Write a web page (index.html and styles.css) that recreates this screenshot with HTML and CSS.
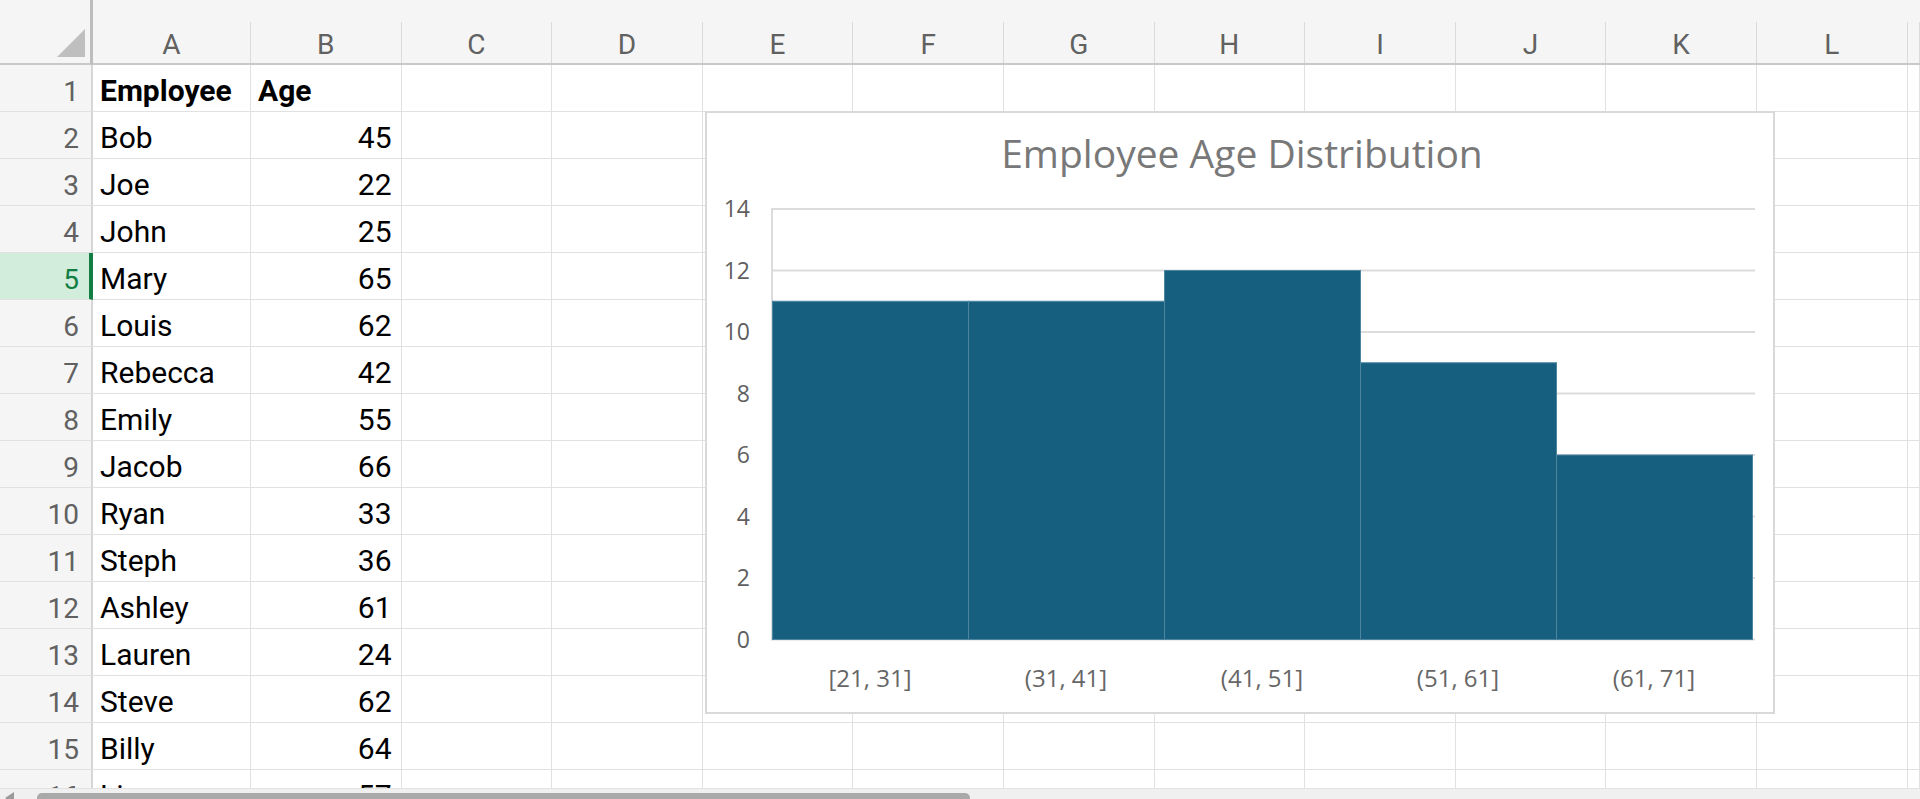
FILE: index.html
```html
<!DOCTYPE html>
<html lang="en">
<head>
<meta charset="utf-8">
<title>Employee Age Distribution</title>
<link rel="stylesheet" href="styles.css">
</head>
<body>
<div class="sheet">
  <div class="corner"><span class="tri"></span></div>
  <div class="colhead"><div>A</div></div>
  <div class="colhead"><div>B</div></div>
  <div class="colhead"><div>C</div></div>
  <div class="colhead"><div>D</div></div>
  <div class="colhead"><div>E</div></div>
  <div class="colhead"><div>F</div></div>
  <div class="colhead"><div>G</div></div>
  <div class="colhead"><div>H</div></div>
  <div class="colhead"><div>I</div></div>
  <div class="colhead"><div>J</div></div>
  <div class="colhead"><div>K</div></div>
  <div class="colhead"><div>L</div></div>
  <div class="colhead"><div></div></div>

  <div class="rowhead">1</div><div class="cell bold">Employee</div><div class="cell bold">Age</div><div class="cell"></div><div class="cell"></div><div class="cell"></div><div class="cell"></div><div class="cell"></div><div class="cell"></div><div class="cell"></div><div class="cell"></div><div class="cell"></div><div class="cell"></div><div class="cell"></div>
  <div class="rowhead">2</div><div class="cell">Bob</div><div class="cell num">45</div><div class="cell"></div><div class="cell"></div><div class="cell"></div><div class="cell"></div><div class="cell"></div><div class="cell"></div><div class="cell"></div><div class="cell"></div><div class="cell"></div><div class="cell"></div><div class="cell"></div>
  <div class="rowhead">3</div><div class="cell">Joe</div><div class="cell num">22</div><div class="cell"></div><div class="cell"></div><div class="cell"></div><div class="cell"></div><div class="cell"></div><div class="cell"></div><div class="cell"></div><div class="cell"></div><div class="cell"></div><div class="cell"></div><div class="cell"></div>
  <div class="rowhead">4</div><div class="cell">John</div><div class="cell num">25</div><div class="cell"></div><div class="cell"></div><div class="cell"></div><div class="cell"></div><div class="cell"></div><div class="cell"></div><div class="cell"></div><div class="cell"></div><div class="cell"></div><div class="cell"></div><div class="cell"></div>
  <div class="rowhead selected">5</div><div class="cell">Mary</div><div class="cell num">65</div><div class="cell"></div><div class="cell"></div><div class="cell"></div><div class="cell"></div><div class="cell"></div><div class="cell"></div><div class="cell"></div><div class="cell"></div><div class="cell"></div><div class="cell"></div><div class="cell"></div>
  <div class="rowhead">6</div><div class="cell">Louis</div><div class="cell num">62</div><div class="cell"></div><div class="cell"></div><div class="cell"></div><div class="cell"></div><div class="cell"></div><div class="cell"></div><div class="cell"></div><div class="cell"></div><div class="cell"></div><div class="cell"></div><div class="cell"></div>
  <div class="rowhead">7</div><div class="cell">Rebecca</div><div class="cell num">42</div><div class="cell"></div><div class="cell"></div><div class="cell"></div><div class="cell"></div><div class="cell"></div><div class="cell"></div><div class="cell"></div><div class="cell"></div><div class="cell"></div><div class="cell"></div><div class="cell"></div>
  <div class="rowhead">8</div><div class="cell">Emily</div><div class="cell num">55</div><div class="cell"></div><div class="cell"></div><div class="cell"></div><div class="cell"></div><div class="cell"></div><div class="cell"></div><div class="cell"></div><div class="cell"></div><div class="cell"></div><div class="cell"></div><div class="cell"></div>
  <div class="rowhead">9</div><div class="cell">Jacob</div><div class="cell num">66</div><div class="cell"></div><div class="cell"></div><div class="cell"></div><div class="cell"></div><div class="cell"></div><div class="cell"></div><div class="cell"></div><div class="cell"></div><div class="cell"></div><div class="cell"></div><div class="cell"></div>
  <div class="rowhead">10</div><div class="cell">Ryan</div><div class="cell num">33</div><div class="cell"></div><div class="cell"></div><div class="cell"></div><div class="cell"></div><div class="cell"></div><div class="cell"></div><div class="cell"></div><div class="cell"></div><div class="cell"></div><div class="cell"></div><div class="cell"></div>
  <div class="rowhead">11</div><div class="cell">Steph</div><div class="cell num">36</div><div class="cell"></div><div class="cell"></div><div class="cell"></div><div class="cell"></div><div class="cell"></div><div class="cell"></div><div class="cell"></div><div class="cell"></div><div class="cell"></div><div class="cell"></div><div class="cell"></div>
  <div class="rowhead">12</div><div class="cell">Ashley</div><div class="cell num">61</div><div class="cell"></div><div class="cell"></div><div class="cell"></div><div class="cell"></div><div class="cell"></div><div class="cell"></div><div class="cell"></div><div class="cell"></div><div class="cell"></div><div class="cell"></div><div class="cell"></div>
  <div class="rowhead">13</div><div class="cell">Lauren</div><div class="cell num">24</div><div class="cell"></div><div class="cell"></div><div class="cell"></div><div class="cell"></div><div class="cell"></div><div class="cell"></div><div class="cell"></div><div class="cell"></div><div class="cell"></div><div class="cell"></div><div class="cell"></div>
  <div class="rowhead">14</div><div class="cell">Steve</div><div class="cell num">62</div><div class="cell"></div><div class="cell"></div><div class="cell"></div><div class="cell"></div><div class="cell"></div><div class="cell"></div><div class="cell"></div><div class="cell"></div><div class="cell"></div><div class="cell"></div><div class="cell"></div>
  <div class="rowhead">15</div><div class="cell">Billy</div><div class="cell num">64</div><div class="cell"></div><div class="cell"></div><div class="cell"></div><div class="cell"></div><div class="cell"></div><div class="cell"></div><div class="cell"></div><div class="cell"></div><div class="cell"></div><div class="cell"></div><div class="cell"></div>
  <div class="rowhead">16</div><div class="cell">Lisa</div><div class="cell num">57</div><div class="cell"></div><div class="cell"></div><div class="cell"></div><div class="cell"></div><div class="cell"></div><div class="cell"></div><div class="cell"></div><div class="cell"></div><div class="cell"></div><div class="cell"></div><div class="cell"></div>
</div>

<div class="chart">
  <svg class="chart-svg" width="1070" height="603" viewBox="0 0 1070 603" xmlns="http://www.w3.org/2000/svg">
    <rect x="1" y="1" width="1068" height="601" fill="#ffffff" stroke="#d9d9d9" stroke-width="2"/>
    <text class="title" x="537" y="57" text-anchor="middle">Employee Age Distribution</text>
    <g stroke="#dcdcdc" stroke-width="2">
      <line x1="67" y1="528.5" x2="1050" y2="528.5"/>
      <line x1="67" y1="467" x2="1050" y2="467"/>
      <line x1="67" y1="405.5" x2="1050" y2="405.5"/>
      <line x1="67" y1="344" x2="1050" y2="344"/>
      <line x1="67" y1="282.5" x2="1050" y2="282.5"/>
      <line x1="67" y1="221" x2="1050" y2="221"/>
      <line x1="67" y1="159.5" x2="1050" y2="159.5"/>
      <line x1="67" y1="98" x2="1050" y2="98"/>
      <line x1="67" y1="97" x2="67" y2="529.5"/>
    </g>
    <g fill="#165f7f" stroke="#4e86a2" stroke-width="1">
      <rect x="67.5" y="190.25" width="196" height="338.25"/>
      <rect x="263.5" y="190.25" width="196" height="338.25"/>
      <rect x="459.5" y="159.5" width="196" height="369"/>
      <rect x="655.5" y="251.75" width="196" height="276.75"/>
      <rect x="851.5" y="344" width="196" height="184.5"/>
    </g>
    <g class="ylab" text-anchor="end">
      <text x="45" y="536.5">0</text>
      <text x="45" y="475">2</text>
      <text x="45" y="413.5">4</text>
      <text x="45" y="352">6</text>
      <text x="45" y="290.5">8</text>
      <text x="45" y="229">10</text>
      <text x="45" y="167.5">12</text>
      <text x="45" y="106">14</text>
    </g>
    <g class="xlab" text-anchor="middle">
      <text x="165" y="576">[21, 31]</text>
      <text x="361" y="576">(31, 41]</text>
      <text x="557" y="576">(41, 51]</text>
      <text x="753" y="576">(51, 61]</text>
      <text x="949" y="576">(61, 71]</text>
    </g>
  </svg>
</div>

<div class="hscroll">
  <span class="arrow"></span>
  <span class="thumb"></span>
</div>
</body>
</html>
```
FILE: styles.css
```css
html, body {
  margin: 0;
  padding: 0;
  background: #ffffff;
}
body {
  width: 1920px;
  height: 799px;
  overflow: hidden;
  position: relative;
  font-family: Roboto, "Liberation Sans", sans-serif;
}

.sheet {
  display: grid;
  grid-template-columns: 93px 158px repeat(11, 150.6px) 1fr;
  grid-template-rows: 65px;
  grid-auto-rows: 47px;
}

.corner {
  background: #f5f5f5;
  border-right: 3px solid #bdbdbd;
  border-bottom: 2px solid #c8c8c8;
  box-sizing: border-box;
  display: flex;
  align-items: flex-end;
  justify-content: flex-end;
  padding: 0 5px 6px 0;
}
.tri {
  width: 0;
  height: 0;
  border-left: 28px solid transparent;
  border-bottom: 28px solid #bfbfbf;
}

.colhead {
  background: #f5f5f5;
  border-bottom: 2px solid #c8c8c8;
  box-sizing: border-box;
  padding-top: 22px;
}
.colhead > div {
  height: 41px;
  box-sizing: border-box;
  border-right: 1px solid #dadada;
  padding-top: 5px;
  line-height: 36px;
  font-size: 28px;
  color: #616161;
  text-align: center;
}

.rowhead {
  background: #f5f5f5;
  border-right: 2px solid #d6d6d6;
  border-bottom: 1px solid #e1e1e1;
  box-sizing: border-box;
  text-align: right;
  padding: 7px 12px 0 0;
  line-height: 40px;
  font-size: 28px;
  color: #616161;
}
.rowhead.selected {
  background: #d3eddd;
  border-right: 4px solid #137e43;
  color: #137e43;
  padding-right: 10px;
}

.cell {
  border-right: 1px solid #e1e1e1;
  border-bottom: 1px solid #e1e1e1;
  box-sizing: border-box;
  padding: 6px 0 0 7px;
  line-height: 40px;
  font-size: 30px;
  color: #000000;
  white-space: nowrap;
  overflow: hidden;
}
.cell.bold {
  font-weight: 700;
}
.cell.num {
  text-align: right;
  padding: 6px 9px 0 0;
}

.chart {
  position: absolute;
  left: 705px;
  top: 111px;
  width: 1070px;
  height: 603px;
}
.chart-svg {
  display: block;
}
.title {
  font-family: "Open Sans", sans-serif;
  font-size: 39px;
  fill: #787878;
}
.ylab text {
  font-family: "Open Sans", sans-serif;
  font-size: 23px;
  fill: #5f5f5f;
}
.xlab text {
  font-family: "Open Sans", sans-serif;
  font-size: 24px;
  fill: #666666;
}

.hscroll {
  position: absolute;
  left: 0;
  right: 0;
  bottom: 0;
  height: 10px;
  background: #f0f0f0;
  border-top: 1px solid #e2e2e2;
}
.arrow {
  position: absolute;
  left: 5px;
  top: 3px;
  width: 0;
  height: 0;
  border-top: 6px solid transparent;
  border-bottom: 6px solid transparent;
  border-right: 9px solid #9a9a9a;
}
.thumb {
  position: absolute;
  left: 37px;
  top: 4px;
  width: 933px;
  height: 10px;
  border-radius: 5px;
  background: #a9a9a9;
}
```
